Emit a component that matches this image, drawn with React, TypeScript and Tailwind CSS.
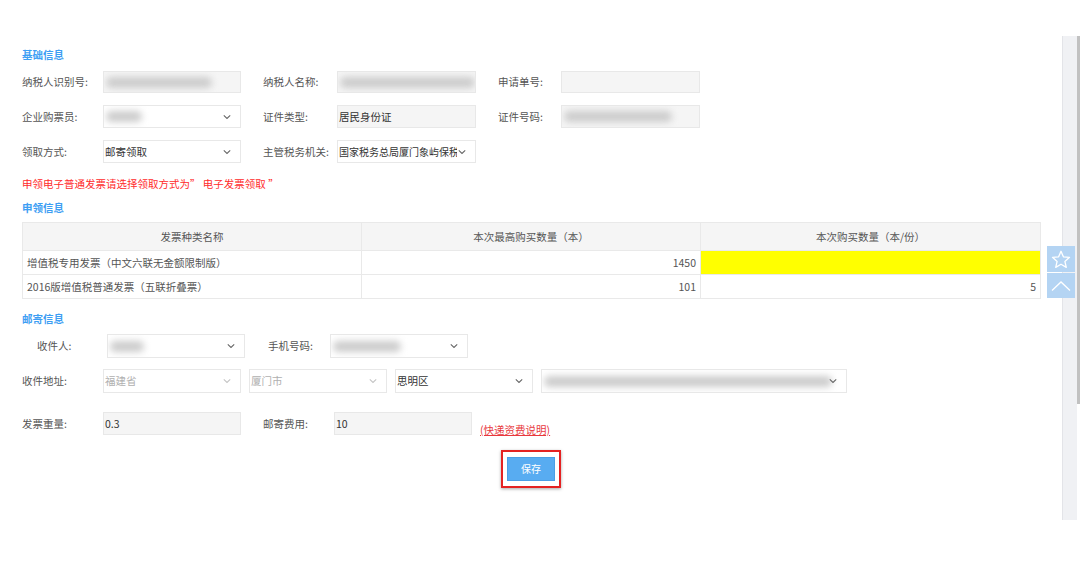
import React from "react";

const Chevron = ({ light }: { light?: boolean }) => (
  <svg width="8" height="5" viewBox="0 0 8 5" className="absolute right-[9px] top-1/2 -translate-y-1/2">
    <polyline points="0.8,0.8 4,4 7.2,0.8" fill="none" stroke={light ? "#c4c4c4" : "#666"} strokeWidth="1.1" />
  </svg>
);

const Blur = ({ w, ml = 1 }: { w: number; ml?: number }) => (
  <div
    className="h-[11px] rounded-full bg-[#cccccc] blur-[3.5px]"
    style={{ width: w, marginLeft: ml }}
  />
);

const Box = ({
  w,
  gray,
  select,
  light,
  children,
}: {
  w: string;
  gray?: boolean;
  select?: boolean;
  light?: boolean;
  children?: React.ReactNode;
}) => (
  <div
    className={`${w} relative h-full flex items-center overflow-hidden border border-[#e8e8e8] pl-[1px] ${
      gray ? "bg-[#f5f5f5]" : "bg-white"
    }`}
  >
    {children}
    {select && <Chevron light={light} />}
  </div>
);

const Head = ({ children }: { children: React.ReactNode }) => (
  <div className="h-[14px] leading-[14px] font-bold text-[#3d9ef3] text-[10.5px]">{children}</div>
);

export default function App() {
  return (
    <div className="relative flex w-[1080px] h-[564px] bg-white font-['Noto_Sans_CJK_SC','Noto_Sans',sans-serif] text-[10.5px] text-[#555] leading-[14px]">
      <div className="w-[1062px] pl-[22px] pt-[48px]">
        <div className="w-[1018px] flex flex-col">
          <Head>基础信息</Head>

          <div className="mt-[9px] flex items-center h-[22px]">
            <span className="w-[81px]">纳税人识别号:</span>
            <Box w="w-[138px]" gray>
              <Blur w={106} />
            </Box>
            <span className="ml-[22px] w-[74px]">纳税人名称:</span>
            <Box w="w-[139px]" gray>
              <Blur w={136} />
            </Box>
            <span className="ml-[22px] w-[63px]">申请单号:</span>
            <Box w="w-[139px]" gray />
          </div>

          <div className="mt-[12px] flex items-center h-[23px]">
            <span className="w-[81px]">企业购票员:</span>
            <Box w="w-[138px]" select>
              <Blur w={36} />
            </Box>
            <span className="ml-[22px] w-[74px]">证件类型:</span>
            <Box w="w-[139px]" gray>
              <span className="text-[#333]">居民身份证</span>
            </Box>
            <span className="ml-[22px] w-[63px]">证件号码:</span>
            <Box w="w-[139px]" gray>
              <Blur w={108} />
            </Box>
          </div>

          <div className="mt-[12px] flex items-center h-[23px]">
            <span className="w-[81px]">领取方式:</span>
            <Box w="w-[138px]" select>
              <span className="text-[#333]">邮寄领取</span>
            </Box>
            <span className="ml-[22px] w-[74px]">主管税务机关:</span>
            <Box w="w-[139px]" select>
              <span className="text-[#333] text-[10px] w-[118px] overflow-hidden whitespace-nowrap">国家税务总局厦门象屿保税区税务局</span>
            </Box>
          </div>

          <div className="mt-[14px] h-[14px] text-[#ff2b2b]">
            申领电子普通发票请选择领取方式为” 电子发票领取 ”
          </div>

          <div className="mt-[10px]">
            <Head>申领信息</Head>
          </div>

          <table className="mt-[7px] w-[1018px] border-collapse table-fixed text-[10.5px]">
            <colgroup>
              <col className="w-[339px]" />
              <col className="w-[339px]" />
              <col className="w-[340px]" />
            </colgroup>
            <thead>
              <tr className="h-[28px] bg-[#f5f5f5]">
                <th className="border border-[#e9e9e9] font-normal text-center text-[#555]">发票种类名称</th>
                <th className="border border-[#e9e9e9] font-normal text-center text-[#555]">本次最高购买数量（本）</th>
                <th className="border border-[#e9e9e9] font-normal text-center text-[#555]">本次购买数量（本/份）</th>
              </tr>
            </thead>
            <tbody>
              <tr className="h-[24px]">
                <td className="border border-[#e9e9e9] pl-[4px] text-[#555]">增值税专用发票（中文六联无金额限制版）</td>
                <td className="border border-[#e9e9e9] pr-[4px] text-right text-[#555]">1450</td>
                <td className="border border-[#e9e9e9] bg-[#ffff00]"></td>
              </tr>
              <tr className="h-[24px]">
                <td className="border border-[#e9e9e9] pl-[4px] text-[#555]">2016版增值税普通发票（五联折叠票）</td>
                <td className="border border-[#e9e9e9] pr-[4px] text-right text-[#555]">101</td>
                <td className="border border-[#e9e9e9] pr-[4px] text-right text-[#555]">5</td>
              </tr>
            </tbody>
          </table>

          <div className="mt-[13px]">
            <Head>邮寄信息</Head>
          </div>

          <div className="mt-[8px] flex items-center h-[24px]">
            <span className="w-[85px] pl-[15px]">收件人:</span>
            <Box w="w-[138px]" select>
              <Blur w={34} />
            </Box>
            <span className="ml-[23px] w-[62px]">手机号码:</span>
            <Box w="w-[138px]" select>
              <Blur w={68} />
            </Box>
          </div>

          <div className="mt-[11px] flex items-center h-[24px]">
            <span className="w-[81px]">收件地址:</span>
            <Box w="w-[138px]" select light>
              <span className="text-[#b0b0b0]">福建省</span>
            </Box>
            <div className="ml-[8px] h-full">
              <Box w="w-[138px]" select light>
                <span className="text-[#b0b0b0]">厦门市</span>
              </Box>
            </div>
            <div className="ml-[8px] h-full">
              <Box w="w-[138px]" select>
                <span className="text-[#333]">思明区</span>
              </Box>
            </div>
            <div className="ml-[8px] h-full">
              <Box w="w-[306px]" select>
                <Blur w={288} />
              </Box>
            </div>
          </div>

          <div className="mt-[19px] flex items-center h-[23px]">
            <span className="w-[81px]">发票重量:</span>
            <Box w="w-[138px]" gray>
              <span className="text-[#333]">0.3</span>
            </Box>
            <span className="ml-[22px] w-[71px]">邮寄费用:</span>
            <Box w="w-[138px]" gray>
              <span className="text-[#333]">10</span>
            </Box>
            <span className="ml-[8px] self-end translate-y-[2px] text-[#e8383d] underline">(快递资费说明)</span>
          </div>

          <div className="mt-[15px] flex justify-center">
            <div className="border-2 border-[#e42222] px-[4px] py-[5px] shadow-[0_1px_3px_rgba(0,0,0,0.35)]">
              <button className="w-[48px] h-[24px] bg-[#58acf1] border border-[#4a9fe6] text-white text-[10px] leading-[22px]">
                保存
              </button>
            </div>
          </div>
        </div>
      </div>

      <div className="flex pt-[36px]">
        <div className="w-[15px] h-[484px] bg-[#f0f1f4] border-l border-[#e3e4e8]" />
        <div className="w-[3px] h-[368px] bg-[#c1c1c1]" />
      </div>

      <div className="absolute left-[1047px] top-[246px] flex flex-col gap-[1px]">
        <div className="w-[28px] h-[26px] bg-[#b4d4f3] flex items-center justify-center">
          <svg width="20" height="19" viewBox="0 0 24 23">
            <polygon
              points="12,1.5 14.9,8.3 22.3,8.9 16.7,13.8 18.4,21 12,17.2 5.6,21 7.3,13.8 1.7,8.9 9.1,8.3"
              fill="none"
              stroke="white"
              strokeWidth="1.6"
              strokeLinejoin="round"
            />
          </svg>
        </div>
        <div className="w-[28px] h-[25px] bg-[#b4d4f3] flex items-center justify-center">
          <svg width="20" height="12" viewBox="0 0 20 12">
            <polyline points="1,10.5 10,2 19,10.5" fill="none" stroke="white" strokeWidth="1.3" />
          </svg>
        </div>
      </div>
    </div>
  );
}
